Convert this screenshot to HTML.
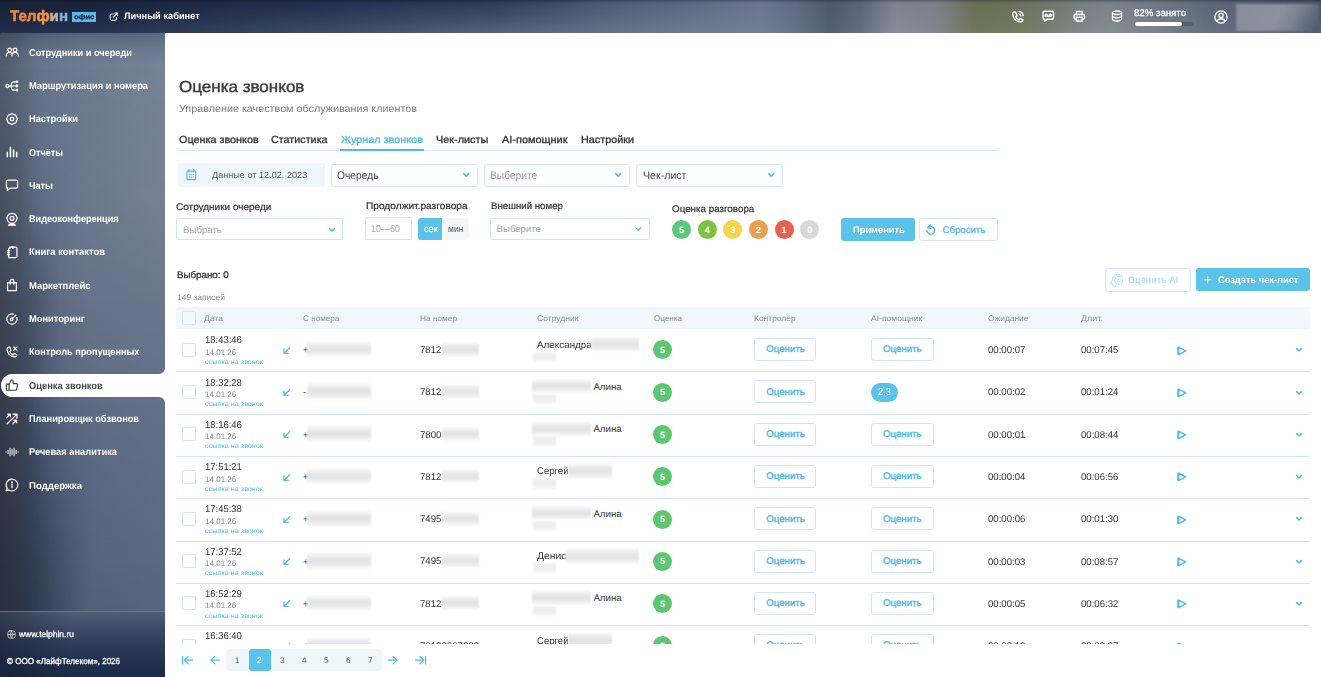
<!DOCTYPE html>
<html lang="ru">
<head>
<meta charset="utf-8">
<title>Оценка звонков</title>
<style>

*{box-sizing:border-box;margin:0;padding:0}
html,body{width:1321px;height:677px;overflow:hidden}
body{font-family:"Liberation Sans",sans-serif;text-rendering:geometricPrecision;color:#333;position:relative;background:#2c3956}
.t{position:absolute;white-space:nowrap;transform-origin:0 50%}
.a{position:absolute}
svg{display:block;overflow:visible}
/* header */
#hdr{position:absolute;left:0;top:0;width:1321px;height:33px;
background:linear-gradient(90deg,#172036 0,#19233c 120px,#1c2742 200px,#222f4c 350px,#2b3955 500px,#3b4965 560px,#485771 600px,#5c6a82 700px,#69778c 760px,#5f6b80 795px,#4c586b 830px,#5a6477 860px,#7b8391 895px,#787f84 940px,#686e54 975px,#6a7058 1010px,#70756a 1045px,#777d80 1080px,#7a8188 1110px,#6f7783 1160px,#5e687a 1205px,#4a5568 1321px)}
#hdr i{position:absolute;left:0;top:0;width:1321px;height:33px;
background:linear-gradient(90deg,#222e49 0,#25324e 100px,#2e3d5a 200px,#3f4e6a 350px,#55627b 500px,#65728a 620px,#6e7b91 700px,#717f93 760px,#667387 795px,#525e72 830px,#636d7f 860px,#858d9b 895px,#7f8689 940px,#70765a 975px,#73795c 1010px,#797e6c 1045px,#81878a 1080px,#848b91 1110px,#79818b 1160px,#667081 1205px,#566174 1321px);
-webkit-mask-image:linear-gradient(180deg,rgba(0,0,0,0) 0,rgba(0,0,0,.25) 8px,rgba(0,0,0,.6) 20px,#000 31px);mask-image:linear-gradient(180deg,rgba(0,0,0,0) 0,rgba(0,0,0,.25) 8px,rgba(0,0,0,.6) 20px,#000 31px)}
#hdr b{position:absolute;left:0;top:0;width:1321px;height:3px;background:linear-gradient(180deg,rgba(10,15,30,.32),rgba(10,15,30,0))}
#side{position:absolute;left:0;top:33px;width:165px;height:579px;border-radius:4px 0 0 0;overflow:hidden;background:#66748a}
#side i{position:absolute;left:0;top:0;width:165px;height:579px}
#sfoot{position:absolute;left:0;top:611px;width:165px;height:66px;border-top:1px solid #66738a;
background:
linear-gradient(90deg,rgba(24,30,46,.5) 0,rgba(24,30,46,.3) 30px,rgba(24,30,46,0) 70px),
linear-gradient(180deg,#4f5d76 0,#3d4b67 16px,#2b3a58 36px,#1f2e4d 55px,#1c2b4a 66px)}
#main{position:absolute;left:165px;top:33px;width:1156px;height:644px;background:#fff}
#active{position:absolute;left:1px;top:374.2px;width:165px;height:22.8px;background:#fff;border-radius:11.4px 0 0 11.4px}
.ic{position:absolute;fill:none;stroke:#fff;stroke-width:2.1;stroke-linecap:round;stroke-linejoin:round}
.box{position:absolute;border:1px solid #d2e7f3;border-radius:3px;background:#fff}
.cb{position:absolute;width:14px;height:14px;border:1px solid #cfe6f3;border-radius:2px;background:#fff}
.sc{position:absolute;width:19px;height:19px;border-radius:50%}
.bl{position:absolute;background:linear-gradient(180deg,#fcfcfc 0,#efefef 22%,#e3e3e3 45%,#e3e3e3 58%,#efefef 80%,#fcfcfc 100%);filter:blur(.8px)}
.b2{background:linear-gradient(180deg,#f3f3f3 0,#ececec 50%,#f8f8f8 100%)}
.hl{position:absolute;height:1px;background:#d2e6f1}
</style>
</head>
<body>
<div id="hdr"><i></i><b></b></div><div id="side"><i style="background:linear-gradient(90deg,#414a5c 0px,#485468 20px,#505f77 40px,#55657e 80px,#586880 165px);"></i><i style="background:linear-gradient(90deg,#4c5668 0px,#556175 20px,#5f6d84 40px,#65738a 80px,#6a788e 165px);-webkit-mask-image:linear-gradient(180deg,rgba(0,0,0,0) 0px,#000 15px);mask-image:linear-gradient(180deg,rgba(0,0,0,0) 0px,#000 15px);"></i><i style="background:linear-gradient(90deg,#525c6e 0px,#5c687c 20px,#67758b 40px,#6e7b8f 80px,#778498 165px);-webkit-mask-image:linear-gradient(180deg,rgba(0,0,0,0) 15px,#000 33px);mask-image:linear-gradient(180deg,rgba(0,0,0,0) 15px,#000 33px);"></i><i style="background:linear-gradient(90deg,#525c6e 0px,#5b677b 20px,#66748a 40px,#6d7a8e 80px,#768396 165px);-webkit-mask-image:linear-gradient(180deg,rgba(0,0,0,0) 33px,#000 37px);mask-image:linear-gradient(180deg,rgba(0,0,0,0) 33px,#000 37px);"></i><i style="background:linear-gradient(90deg,#47505f 0px,#4f5a6c 20px,#5f6d84 40px,#6b788c 80px,#758192 165px);-webkit-mask-image:linear-gradient(180deg,rgba(0,0,0,0) 37px,#000 167px);mask-image:linear-gradient(180deg,rgba(0,0,0,0) 37px,#000 167px);"></i><i style="background:linear-gradient(90deg,#3d4554 0px,#434d60 20px,#4a566c 35px,#5e6c84 60px,#667388 90px,#6b778b 165px);-webkit-mask-image:linear-gradient(180deg,rgba(0,0,0,0) 167px,#000 267px);mask-image:linear-gradient(180deg,rgba(0,0,0,0) 167px,#000 267px);"></i><i style="background:linear-gradient(90deg,#343c4b 0px,#3b4556 20px,#3f4a60 30px,#44526b 36px,#4f5d76 50px,#5a6880 70px,#5f6d84 100px,#63718a 165px);-webkit-mask-image:linear-gradient(180deg,rgba(0,0,0,0) 267px,#000 371px);mask-image:linear-gradient(180deg,rgba(0,0,0,0) 267px,#000 371px);"></i><i style="background:linear-gradient(90deg,#2a3140 0px,#2d374a 20px,#313d52 35px,#3f4d66 55px,#55647d 90px,#5a6981 165px);-webkit-mask-image:linear-gradient(180deg,rgba(0,0,0,0) 371px,#000 533px);mask-image:linear-gradient(180deg,rgba(0,0,0,0) 371px,#000 533px);"></i><i style="background:linear-gradient(90deg,#282f3e 0px,#2b3548 20px,#2f3b50 35px,#3c4a63 55px,#52617a 90px,#566580 165px);-webkit-mask-image:linear-gradient(180deg,rgba(0,0,0,0) 533px,#000 579px);mask-image:linear-gradient(180deg,rgba(0,0,0,0) 533px,#000 579px);"></i></div><div id="sfoot"></div><div id="main"></div><div id="active"></div>
<svg class="a" style="left:159px;top:368px" width="6" height="6" viewBox="0 0 6 6"><path d="M6 0V6H0A6 6 0 0 0 6 0Z" fill="#fff"/></svg>
<svg class="a" style="left:159px;top:397px" width="6" height="6" viewBox="0 0 6 6"><path d="M6 6V0H0A6 6 0 0 1 6 6Z" fill="#fff"/></svg>
<svg class="ic" style="left:5.4px;top:45.2px" width="14" height="14" viewBox="0 0 24 24"><circle cx="7.900" cy="8.600" r="3.200"/><path d="M2.200 18.500c.3-3.600 2.500-5.800 5.700-5.800 1.900 0 3.400.9 4.400 2.300"/><circle cx="17.300" cy="8.600" r="3.200"/><path d="M11.800 18.500c.3-3.600 2.400-5.800 5.500-5.800s5.200 2.200 5.500 5.800"/></svg>
<span class="t" style="left:29.40px;top:47.60px;font-size:10px;line-height:12px;color:#fff;font-weight:bold;transform:scaleX(0.9182);">Сотрудники и очереди</span>
<svg class="ic" style="left:5.4px;top:78.5px" width="14" height="14" viewBox="0 0 24 24"><circle cx="4.200" cy="12" r="2.600"/><path d="M7 12h12M10.500 12c0-4.500 2-7 5-7h3.500M10.500 12c0 4.500 2 7 5 7h3.500"/><circle cx="20.500" cy="5" r="1.400" fill="#fff"/><circle cx="20.500" cy="12" r="1.400" fill="#fff"/><circle cx="20.500" cy="19" r="1.400" fill="#fff"/></svg>
<span class="t" style="left:29.40px;top:80.90px;font-size:10px;line-height:12px;color:#fff;font-weight:bold;transform:scaleX(0.9293);">Маршрутизация и номера</span>
<svg class="ic" style="left:5.4px;top:111.8px" width="14" height="14" viewBox="0 0 24 24"><path d="M10.47 3.35Q12.00 2.10 13.53 3.35Q15.06 4.61 17.03 4.80Q19.00 5.00 19.20 6.97Q19.39 8.94 20.65 10.47Q21.90 12.00 20.65 13.53Q19.39 15.06 19.20 17.03Q19.00 19.00 17.03 19.20Q15.06 19.39 13.53 20.65Q12.00 21.90 10.47 20.65Q8.94 19.39 6.97 19.20Q5.00 19.00 4.80 17.03Q4.61 15.06 3.35 13.53Q2.10 12.00 3.35 10.47Q4.61 8.94 4.80 6.97Q5.00 5.00 6.97 4.80Q8.94 4.61 10.47 3.35Z"/><circle cx="12" cy="12" r="3"/></svg>
<span class="t" style="left:29.40px;top:114.20px;font-size:10px;line-height:12px;color:#fff;font-weight:bold;transform:scaleX(0.9286);">Настройки</span>
<svg class="ic" style="left:5.4px;top:145.1px" width="14" height="14" viewBox="0 0 24 24"><path d="M4 13v7M9.300 4v16M14.700 8.500V20M20 13v7" stroke-width="2.600"/></svg>
<span class="t" style="left:29.40px;top:147.50px;font-size:10px;line-height:12px;color:#fff;font-weight:bold;transform:scaleX(0.9070);">Отчёты</span>
<svg class="ic" style="left:5.4px;top:178.4px" width="14" height="14" viewBox="0 0 24 24"><path d="M5 3.500h14a2.500 2.500 0 0 1 2.500 2.500v9a2.500 2.500 0 0 1-2.500 2.500H9.500L4 21.500v-4H5A2.500 2.500 0 0 1 2.500 15V6A2.500 2.500 0 0 1 5 3.500z"/></svg>
<span class="t" style="left:29.40px;top:180.80px;font-size:10px;line-height:12px;color:#fff;font-weight:bold;transform:scaleX(0.9220);">Чаты</span>
<svg class="ic" style="left:5.4px;top:211.7px" width="14" height="14" viewBox="0 0 24 24"><circle cx="12" cy="10.800" r="8.600"/><circle cx="12" cy="10.800" r="3.400"/><path d="M6 22.500c1.500-1.700 3.500-2.500 6-2.500s4.500.8 6 2.500z" fill="#fff"/></svg>
<span class="t" style="left:29.40px;top:214.10px;font-size:10px;line-height:12px;color:#fff;font-weight:bold;transform:scaleX(0.9102);">Видеоконференция</span>
<svg class="ic" style="left:5.4px;top:245.0px" width="14" height="14" viewBox="0 0 24 24"><path d="M8 3.500h10.500a2 2 0 0 1 2 2v14a2 2 0 0 1-2 2H6.500v-15z"/><path d="M6.500 6.500l7-4v3.500"/><path d="M4 9.500h4M4 13h4M4 16.500h4"/></svg>
<span class="t" style="left:29.40px;top:247.40px;font-size:10px;line-height:12px;color:#fff;font-weight:bold;transform:scaleX(0.9463);">Книга контактов</span>
<svg class="ic" style="left:5.4px;top:278.3px" width="14" height="14" viewBox="0 0 24 24"><path d="M4.500 8h15v13.500h-15z"/><path d="M9 10.500V5.500a3 3 0 0 1 6 0v5"/></svg>
<span class="t" style="left:29.40px;top:280.70px;font-size:10px;line-height:12px;color:#fff;font-weight:bold;transform:scaleX(0.9462);">Маркетплейс</span>
<svg class="ic" style="left:5.4px;top:311.6px" width="14" height="14" viewBox="0 0 24 24"><path d="M20.300 9.500A8.800 8.800 0 1 1 14.500 3.700"/><circle cx="11.500" cy="12.500" r="2.300"/><path d="M13.200 10.800l5.300-5.300"/></svg>
<span class="t" style="left:29.40px;top:314.00px;font-size:10px;line-height:12px;color:#fff;font-weight:bold;transform:scaleX(0.9288);">Мониторинг</span>
<svg class="ic" style="left:5.4px;top:344.9px" width="14" height="14" viewBox="0 0 24 24"><path d="M6.500 3.500c-1.500.3-3 1.500-3 3.500 0 7.500 6 13.500 13.500 13.500 2 0 3.200-1.500 3.500-3 .1-.6-.2-1-.7-1.200l-3.600-1.500c-.5-.2-1 0-1.300.4l-1.200 1.600c-2.500-1.200-4.500-3.200-5.700-5.700l1.600-1.200c.4-.3.600-.8.400-1.300L8.500 4.200c-.2-.5-.6-.800-1.200-.700z"/><path d="M15 3.500l5.500 5.500M20.500 3.500L15 9"/></svg>
<span class="t" style="left:29.40px;top:347.30px;font-size:10px;line-height:12px;color:#fff;font-weight:bold;transform:scaleX(0.9167);">Контроль пропущенных</span>
<svg class="ic" style="left:5.4px;top:378.2px;stroke:#444" width="14" height="14" viewBox="0 0 24 24"><path d="M2.500 10.500h4.500v10.500H2.500z"/><path d="M7 11l4-8c1.700 0 3 1.300 3 3v3.500h5.500c1.300 0 2.300 1.200 2 2.500l-1.400 7c-.2 1.200-1.200 2-2.400 2H7"/></svg>
<span class="t" style="left:29.40px;top:380.60px;font-size:10px;line-height:12px;color:#4a4a4a;font-weight:bold;transform:scaleX(0.9325);">Оценка звонков</span>
<svg class="ic" style="left:5.4px;top:411.5px" width="14" height="14" viewBox="0 0 24 24"><path d="M3.500 20.500L20 4M13.500 3.500h7v7"/><path d="M3 9.500l5.500-5.500M4.500 3.500h4.500v4.500" stroke-width="2"/><path d="M13.500 20.500l6-6M15.500 14h4.500v4.500" stroke-width="2"/></svg>
<span class="t" style="left:29.40px;top:413.90px;font-size:10px;line-height:12px;color:#fff;font-weight:bold;transform:scaleX(0.9199);">Планировщик обзвонов</span>
<svg class="ic" style="left:5.4px;top:444.8px" width="14" height="14" viewBox="0 0 24 24"><path d="M1.89 11.00v2.00M5.31 8.55v6.90M8.74 4.70v14.60M12.17 6.85v10.30M15.60 4.70v14.60M19.03 8.55v6.90M22.46 11.00v2.00" stroke-width="1.700" stroke-linecap="butt"/></svg>
<span class="t" style="left:29.40px;top:447.20px;font-size:10px;line-height:12px;color:#fff;font-weight:bold;transform:scaleX(0.9304);">Речевая аналитика</span>
<svg class="ic" style="left:5.4px;top:478.1px" width="14" height="14" viewBox="0 0 24 24"><path d="M12 2a10 10 0 1 1-5.400 18.400L2 22l1.700-4.400A10 10 0 0 1 12 2z"/><path d="M12 11v5.500"/><circle cx="12" cy="7.500" r=".7" fill="#fff"/></svg>
<span class="t" style="left:29.40px;top:480.50px;font-size:10px;line-height:12px;color:#fff;font-weight:bold;transform:scaleX(0.9625);">Поддержка</span>
<svg class="ic" style="left:6.5px;top:629.5px;stroke-width:2.2;opacity:.8" width="9" height="9" viewBox="0 0 24 24"><rect x="2.500" y="2.500" width="19" height="19" rx="5"/><path d="M2.500 12h19M12 2.500c-4 3-4 16 0 19M12 2.500c4 3 4 16 0 19"/></svg>
<span class="t" style="left:19.40px;top:628.60px;font-size:8.6px;line-height:10px;color:#fff;-webkit-text-stroke:0.3px #fff;transform:scaleX(0.9823);">www.telphin.ru</span>
<span class="t" style="left:6.90px;top:655.80px;font-size:8.6px;line-height:10px;color:#fff;-webkit-text-stroke:0.3px #fff;transform:scaleX(0.9385);">© ООО «ЛайфТелеком», 2026</span>
<span class="t" style="left:10.00px;top:7.80px;font-size:15.2px;line-height:18px;color:#f5873b;font-weight:bold;transform:scaleX(0.9922);"><span style="color:#f5873b;-webkit-text-stroke:.5px #f5873b">Тел</span><span style="color:#f49a45;-webkit-text-stroke:.5px #f49a45">ф</span><span style="color:#c9b5a5;-webkit-text-stroke:.5px #c9b5a5">и</span><span style="color:#7fb5dc;-webkit-text-stroke:.5px #7fb5dc">н</span></span>
<div class="a" style="left:72px;top:12px;width:24px;height:10px;background:#5bb8e4"></div>
<span class="t" style="left:73.70px;top:14.10px;font-size:6.7px;line-height:8px;color:#16264c;font-weight:bold;-webkit-text-stroke:0.25px #16264c;transform:scaleX(1.1473);">офис</span>
<svg class="ic" style="left:108.8px;top:12px;stroke-width:2.6" width="9.4" height="9.4" viewBox="0 0 24 24"><path d="M10 5H6.500A3.500 3.500 0 0 0 3 8.500v9A3.500 3.500 0 0 0 6.500 21h9a3.500 3.500 0 0 0 3.500-3.500V14"/><path d="M14.500 2.500h7v7M21 3L11 13"/></svg>
<span class="t" style="left:124.20px;top:11.30px;font-size:9.6px;line-height:12px;color:#fff;font-weight:bold;transform:scaleX(0.9666);">Личный кабинет</span>
<svg class="ic" style="left:1010.8px;top:9.5px;stroke-width:2.600" width="13.6" height="13.6" viewBox="0 0 24 24"><path d="M6 3c-1.500.3-3 1.500-3 3.500C3 14.500 9.500 21 17.500 21c2 0 3.200-1.500 3.500-3 .1-.6-.2-1-.7-1.200l-3.600-1.500c-.5-.2-1 0-1.300.4l-1.200 1.600c-2.500-1.200-4.500-3.200-5.700-5.700l1.600-1.200c.4-.3.600-.8.400-1.300L9 5.500 8 3.700c-.2-.5-.6-.800-2-.700z"/><path d="M14 2.500c4.500.3 7.200 3 7.500 7.500M13.500 6.500c2.300.2 3.800 1.700 4 4"/></svg>
<svg class="ic" style="left:1042px;top:9.9px;stroke-width:2.700" width="12.6" height="12.6" viewBox="0 0 24 24"><path d="M4.500 2.500h15a2.500 2.500 0 0 1 2.500 2.500v10a2.500 2.500 0 0 1-2.500 2.500H10l-5 4v-4h-.5A2.500 2.500 0 0 1 2 15V5a2.500 2.500 0 0 1 2.500-2.500z"/><circle cx="8" cy="10" r="2"/><circle cx="16" cy="10" r="2"/><path d="M8 12h8"/></svg>
<svg class="ic" style="left:1072.5px;top:10.2px;stroke-width:2.700" width="12.6" height="12.6" viewBox="0 0 24 24"><path d="M6.500 8.500V3h11v5.500"/><path d="M6 17.500H4.500A2.500 2.500 0 0 1 2 15v-4a2.500 2.500 0 0 1 2.500-2.500h15A2.500 2.500 0 0 1 22 11v4a2.500 2.500 0 0 1-2.500 2.500H18"/><path d="M6.500 13.500h11V21h-11z"/></svg>
<svg class="ic" style="left:1111.2px;top:10px;stroke-width:2.600" width="12" height="12" viewBox="0 0 24 24"><ellipse cx="12" cy="5.500" rx="9" ry="3.500"/><path d="M3 5.500v13c0 2 4 3.500 9 3.500s9-1.500 9-3.500v-13M3 12c0 2 4 3.500 9 3.500s9-1.500 9-3.500"/></svg>
<span class="t" style="left:1134.30px;top:7.90px;font-size:9.6px;line-height:12px;color:#fff;-webkit-text-stroke:0.3px #fff;transform:scaleX(1.0054);">82% занято</span>
<div class="a" style="left:1134.5px;top:22px;width:58px;height:4px;border-radius:2px;background:#555e6d"></div>
<div class="a" style="left:1134.5px;top:22px;width:47.5px;height:4px;border-radius:2px;background:#fff"></div>
<svg class="ic" style="left:1213.6px;top:9.6px;stroke-width:2.300" width="14" height="14" viewBox="0 0 24 24"><circle cx="12" cy="12" r="10.500"/><circle cx="12" cy="9.500" r="3.600"/><path d="M5 19.500c1.200-3 3.800-4.500 7-4.500s5.800 1.500 7 4.500"/></svg>
<div class="a" style="left:1235.5px;top:4.2px;width:83.5px;height:26.5px;background:linear-gradient(118deg,#878d99 0,#8c929d 50%,#7b8391 68%,#626b7b 85%,#4f596a 100%);filter:blur(1.200px)"></div>
<span class="t" style="left:178.90px;top:78.40px;font-size:16px;line-height:19px;color:#3a3a3a;-webkit-text-stroke:0.4px #3a3a3a;transform:scaleX(1.0643);">Оценка звонков</span>
<span class="t" style="left:178.90px;top:104.30px;font-size:10.3px;line-height:12px;color:#777;transform:scaleX(1.0464);">Управление качеством обслуживания клиентов</span>
<span class="t" style="left:178.90px;top:135.10px;font-size:10.3px;line-height:12px;color:#333;-webkit-text-stroke:0.3px #333;transform:scaleX(1.0508);">Оценка звонков</span>
<span class="t" style="left:271.30px;top:135.10px;font-size:10.3px;line-height:12px;color:#333;-webkit-text-stroke:0.3px #333;transform:scaleX(1.0463);">Статистика</span>
<span class="t" style="left:340.60px;top:135.10px;font-size:10.3px;line-height:12px;color:#50bae9;-webkit-text-stroke:0.3px #50bae9;transform:scaleX(1.0547);">Журнал звонков</span>
<span class="t" style="left:435.90px;top:135.10px;font-size:10.3px;line-height:12px;color:#333;-webkit-text-stroke:0.3px #333;transform:scaleX(1.0552);">Чек-листы</span>
<span class="t" style="left:502.20px;top:135.10px;font-size:10.3px;line-height:12px;color:#333;-webkit-text-stroke:0.3px #333;transform:scaleX(1.0618);">AI-помощник</span>
<span class="t" style="left:581.10px;top:135.10px;font-size:10.3px;line-height:12px;color:#333;-webkit-text-stroke:0.3px #333;transform:scaleX(1.0495);">Настройки</span>
<div class="hl" style="left:178px;top:150px;width:820px;background:#d6ebf6"></div>
<div class="a" style="left:340px;top:149px;width:83.5px;height:2px;background:#50bae9"></div>
<div class="a" style="left:178px;top:163px;width:147px;height:24px;border-radius:3px;background:#f0f7fc"></div>
<svg class="a" style="left:185.7px;top:168.8px" width="10.6" height="11.4" viewBox="0 0 20 22" fill="none" stroke="#50bae9" stroke-width="2.200"><rect x="1.500" y="4" width="17" height="16.500" rx="1.500"/><path d="M5.500 1v5M14.500 1v5" stroke-linecap="round"/><path d="M5 10.500h2.500M8.800 10.500h2.500M12.600 10.500h2.500M5 14h2.500M8.800 14h2.500M12.600 14h2.500M5 17.200h2.500M8.800 17.200h2.500" stroke-width="1.800"/></svg>
<span class="t" style="left:211.70px;top:170.30px;font-size:8.9px;line-height:11px;color:#555;transform:scaleX(1.0271);">Данные от 12.02. 2023</span>
<div class="box" style="left:331.0px;top:163.5px;width:147.0px;height:23.5px"></div>
<span class="t" style="left:337.30px;top:170.20px;font-size:11.1px;line-height:13px;color:#444;transform:scaleX(0.9257);">Очередь</span>
<svg class="a" style="left:463.0px;top:173.0px" width="6.4" height="3.8" viewBox="0 0 10 6"><path d="M1 1l4 4 4-4" fill="none" stroke="#50bae9" stroke-width="2.66" stroke-linecap="round" stroke-linejoin="round"/></svg>
<div class="box" style="left:484.0px;top:163.5px;width:146.0px;height:23.5px"></div>
<span class="t" style="left:490.30px;top:170.20px;font-size:11.1px;line-height:13px;color:#9a9a9a;transform:scaleX(0.9207);">Выберите</span>
<svg class="a" style="left:615.0px;top:173.0px" width="6.4" height="3.8" viewBox="0 0 10 6"><path d="M1 1l4 4 4-4" fill="none" stroke="#50bae9" stroke-width="2.66" stroke-linecap="round" stroke-linejoin="round"/></svg>
<div class="box" style="left:636.4px;top:163.5px;width:146.2px;height:23.5px"></div>
<span class="t" style="left:642.70px;top:170.20px;font-size:11.1px;line-height:13px;color:#444;transform:scaleX(0.9577);">Чек-лист</span>
<svg class="a" style="left:767.6px;top:173.0px" width="6.4" height="3.8" viewBox="0 0 10 6"><path d="M1 1l4 4 4-4" fill="none" stroke="#50bae9" stroke-width="2.66" stroke-linecap="round" stroke-linejoin="round"/></svg>
<span class="t" style="left:176.00px;top:201.50px;font-size:9.6px;line-height:12px;color:#333;-webkit-text-stroke:0.22px #333;transform:scaleX(1.0414);">Сотрудники очереди</span>
<span class="t" style="left:365.60px;top:200.80px;font-size:9.6px;line-height:12px;color:#333;-webkit-text-stroke:0.22px #333;transform:scaleX(1.0580);">Продолжит.разговора</span>
<span class="t" style="left:490.60px;top:201.30px;font-size:9.6px;line-height:12px;color:#333;-webkit-text-stroke:0.22px #333;transform:scaleX(1.0082);">Внешний номер</span>
<span class="t" style="left:672.30px;top:204.00px;font-size:9.6px;line-height:12px;color:#333;-webkit-text-stroke:0.2px #333;transform:scaleX(1.0226);">Оценка разговора</span>
<div class="box" style="left:176px;top:218.2px;width:167px;height:21.5px;border-radius:2px"></div>
<span class="t" style="left:182.90px;top:224.50px;font-size:9.6px;line-height:12px;color:#a5a5a5;transform:scaleX(1.0063);">Выбрать</span>
<svg class="a" style="left:328.5px;top:227.5px" width="6.0" height="3.6" viewBox="0 0 10 6"><path d="M1 1l4 4 4-4" fill="none" stroke="#50bae9" stroke-width="2.67" stroke-linecap="round" stroke-linejoin="round"/></svg>
<div class="box" style="left:365.3px;top:217.2px;width:47px;height:23.3px;border-radius:2px"></div>
<span class="t" style="left:371.40px;top:224.40px;font-size:10px;line-height:12px;color:#aaa;transform:scaleX(0.8992);">10—60</span>
<div class="a" style="left:418px;top:218px;width:24px;height:22px;background:#5bc2ea;border-radius:3px 0 0 3px"></div>
<div class="a" style="left:442px;top:218px;width:26.6px;height:22px;background:#f1f8fc;border-radius:0 4px 4px 0"></div>
<span class="t" style="left:423.60px;top:223.90px;font-size:9.6px;line-height:12px;color:#fff;-webkit-text-stroke:0.1px #fff;transform:scaleX(0.9551);">сек</span>
<span class="t" style="left:447.70px;top:223.90px;font-size:9.6px;line-height:12px;color:#555;transform:scaleX(0.8977);">мин</span>
<div class="box" style="left:490px;top:218.2px;width:160px;height:21.5px;border-radius:2px"></div>
<span class="t" style="left:496.60px;top:224.40px;font-size:9.6px;line-height:12px;color:#a5a5a5;">Выберите</span>
<svg class="a" style="left:634.7px;top:227.0px" width="6.6" height="4.0" viewBox="0 0 10 6"><path d="M1 1l4 4 4-4" fill="none" stroke="#50bae9" stroke-width="1.67" stroke-linecap="round" stroke-linejoin="round"/></svg>
<div class="sc" style="left:672.1px;top:219.9px;background:#5cc878"></div>
<span class="t" style="left:679.00px;top:224.50px;font-size:9px;line-height:11px;color:#fff;font-weight:bold;">5</span>
<div class="sc" style="left:697.8px;top:219.9px;background:#7fc241"></div>
<span class="t" style="left:704.65px;top:224.50px;font-size:9px;line-height:11px;color:#fff;font-weight:bold;">4</span>
<div class="sc" style="left:723.4px;top:219.9px;background:#f7d24c"></div>
<span class="t" style="left:730.30px;top:224.50px;font-size:9px;line-height:11px;color:#fff;font-weight:bold;">3</span>
<div class="sc" style="left:749.1px;top:219.9px;background:#e8a04e"></div>
<span class="t" style="left:755.95px;top:224.50px;font-size:9px;line-height:11px;color:#fff;font-weight:bold;">2</span>
<div class="sc" style="left:774.7px;top:219.9px;background:#e7604f"></div>
<span class="t" style="left:781.60px;top:224.50px;font-size:9px;line-height:11px;color:#fff;font-weight:bold;">1</span>
<div class="sc" style="left:800.4px;top:219.9px;background:#d8d8d8"></div>
<span class="t" style="left:807.25px;top:224.50px;font-size:9px;line-height:11px;color:#fff;font-weight:bold;">0</span>
<div class="a" style="left:841.3px;top:218.2px;width:73.6px;height:22.5px;border-radius:3px;background:#5bc2ea"></div>
<span class="t" style="left:852.50px;top:224.50px;font-size:9.6px;line-height:12px;color:#fff;font-weight:bold;transform:scaleX(0.9705);">Применить</span>
<div class="box" style="left:919px;top:218.2px;width:78.7px;height:22.5px"></div>
<svg class="a" style="left:926px;top:224px" width="9.6" height="10.6" viewBox="0 0 20 22" fill="none" stroke="#50bae9" stroke-width="2.900" stroke-linecap="round" stroke-linejoin="round"><path d="M4.500 7.500A8 8 0 1 1 2 13"/><path d="M9 1.500L4.200 7.200 10 9.500"/></svg>
<span class="t" style="left:942.60px;top:224.80px;font-size:9.6px;line-height:12px;color:#50bae9;-webkit-text-stroke:0.3px #50bae9;">Сбросить</span>
<span class="t" style="left:176.50px;top:269.70px;font-size:9.6px;line-height:12px;color:#333;-webkit-text-stroke:0.3px #333;transform:scaleX(1.0164);">Выбрано: 0</span>
<span class="t" style="left:176.50px;top:293.00px;font-size:8.1px;line-height:10px;color:#8a8a8a;transform:scaleX(1.0445);">149 записей</span>
<div class="box" style="left:1105px;top:268.4px;width:85.5px;height:23.3px"></div>
<svg class="a" style="left:1110px;top:273.5px" width="13" height="13" viewBox="0 0 13 13" fill="none" stroke="#b3e1f5" stroke-width="1.100" stroke-linecap="round" stroke-linejoin="round"><path d="M6.300 12.300c-2 .5-3.500-.2-3.600-2.100L1.200 9.600c-.4-.2-.5-.5-.3-.9L2.300 6.400C2.400 3.100 4.900.7 8.300.6c1.100 0 2.100.2 3 .7"/><circle cx="8.700" cy="6.200" r="3.900"/></svg>
<span class="t" style="left:1116.70px;top:277.50px;font-size:4.6px;line-height:6px;color:#b3e1f5;font-weight:bold;transform:scaleX(0.9143);">AI</span>
<span class="t" style="left:1127.60px;top:274.80px;font-size:9.6px;line-height:12px;color:#b3e1f5;font-weight:bold;transform:scaleX(0.9465);">Оценить AI</span>
<div class="a" style="left:1196.1px;top:268.4px;width:113.7px;height:22.3px;border-radius:3px;background:#5bc2ea"></div>
<svg class="a" style="left:1203.6px;top:276px" width="7.4" height="7.4" viewBox="0 0 10 10" stroke="#fff" stroke-width="1.500" stroke-linecap="round"><path d="M5 .8v8.400M.8 5h8.400"/></svg>
<span class="t" style="left:1218.00px;top:274.60px;font-size:9.6px;line-height:12px;color:#fff;font-weight:bold;transform:scaleX(0.9681);">Создать чек-лист</span>
<div class="a" style="left:176px;top:307px;width:1134px;height:22.3px;border-radius:3px 3px 0 0;background:#f0f8fd"></div>
<div class="cb" style="left:182px;top:311px;background:#f3f9fd;border-color:#d6e9f3"></div>
<span class="t" style="left:203.90px;top:314.20px;font-size:8.1px;line-height:10px;color:#8a8a8a;transform:scaleX(1.0537);">Дата</span>
<span class="t" style="left:302.70px;top:314.20px;font-size:8.1px;line-height:10px;color:#8a8a8a;transform:scaleX(1.0072);">С номера</span>
<span class="t" style="left:420.00px;top:314.20px;font-size:8.1px;line-height:10px;color:#8a8a8a;transform:scaleX(1.0238);">На номер</span>
<span class="t" style="left:536.50px;top:314.20px;font-size:8.1px;line-height:10px;color:#8a8a8a;transform:scaleX(1.0552);">Сотрудник</span>
<span class="t" style="left:654.00px;top:314.20px;font-size:8.1px;line-height:10px;color:#8a8a8a;">Оценка</span>
<span class="t" style="left:754.00px;top:314.20px;font-size:8.1px;line-height:10px;color:#8a8a8a;transform:scaleX(1.0437);">Контролёр</span>
<span class="t" style="left:871.00px;top:314.20px;font-size:8.1px;line-height:10px;color:#8a8a8a;transform:scaleX(1.0560);">AI-помощник</span>
<span class="t" style="left:987.80px;top:314.20px;font-size:8.1px;line-height:10px;color:#8a8a8a;transform:scaleX(1.0397);">Ожидание</span>
<span class="t" style="left:1081.40px;top:314.20px;font-size:8.1px;line-height:10px;color:#8a8a8a;transform:scaleX(1.1062);">Длит.</span>
<div class="a" style="left:165px;top:329px;width:1156px;height:315px;overflow:hidden">
<div class="cb" style="left:17px;top:13.6px"></div>
<span class="t" style="left:39.60px;top:6.20px;font-size:9.9px;line-height:12px;color:#333;transform:scaleX(0.9596);">18:43:46</span>
<span class="t" style="left:39.60px;top:18.60px;font-size:8.1px;line-height:10px;color:#8a8a8a;transform:scaleX(0.9932);">14.01.26</span>
<span class="t" style="left:39.60px;top:29.80px;font-size:6.6px;line-height:8px;color:#50bae9;transform:scaleX(1.0908);">ссылка на звонок</span>
<svg class="a" style="left:117.6px;top:17.6px" width="7.4" height="7.4" viewBox="0 0 10 10" fill="none" stroke="#50bae9" stroke-width="1.700" stroke-linecap="round" stroke-linejoin="round"><path d="M9 1L1.500 8.500M1.300 3v5.700H7"/></svg>
<span class="t" style="left:138.00px;top:16.00px;font-size:9.6px;line-height:12px;color:#444;">+</span>
<div class="bl" style="left:142.0px;top:11.8px;width:64px;height:16.5px"></div>
<span class="t" style="left:255.00px;top:15.90px;font-size:9.8px;line-height:12px;color:#333;transform:scaleX(0.9772);">7812</span>
<div class="bl" style="left:277.1px;top:12.9px;width:36.6px;height:14.7px"></div>
<span class="t" style="left:371.60px;top:10.50px;font-size:9.7px;line-height:12px;color:#333;transform:scaleX(1.0175);">Александра</span>
<div class="bl" style="left:426.4px;top:7.0px;width:48.0px;height:16px"></div>
<div class="bl b2" style="left:368.1px;top:22.7px;width:23px;height:10px"></div>
<div class="sc" style="left:488.1px;top:11.3px;background:#5cc76f"></div>
<span class="t" style="left:495.00px;top:15.90px;font-size:9px;line-height:11px;color:#fff;font-weight:bold;">5</span>
<div class="box" style="left:589.0px;top:9.0px;width:62.3px;height:23px"></div>
<span class="t" style="left:601.20px;top:15.30px;font-size:9.7px;line-height:12px;color:#50bae9;-webkit-text-stroke:0.4px #50bae9;">Оценить</span>
<div class="box" style="left:706.0px;top:9.0px;width:62.6px;height:23px"></div>
<span class="t" style="left:718.00px;top:15.30px;font-size:9.7px;line-height:12px;color:#50bae9;-webkit-text-stroke:0.4px #50bae9;">Оценить</span>
<span class="t" style="left:822.80px;top:16.00px;font-size:9.8px;line-height:12px;color:#333;transform:scaleX(0.9780);">00:00:07</span>
<span class="t" style="left:916.40px;top:16.00px;font-size:9.8px;line-height:12px;color:#333;transform:scaleX(0.9806);">00:07:45</span>
<svg class="a" style="left:1011.6px;top:16.5px" width="9.6" height="9.8" viewBox="0 0 10 10" fill="none" stroke="#50bae9" stroke-width="1.500" stroke-linejoin="round"><path d="M1.600 1l7.500 4-7.500 4z"/><path d="M1.300 1v8" stroke-width="2"/></svg>
<svg class="a" style="left:1130.7px;top:19.2px" width="6.0" height="3.6" viewBox="0 0 10 6"><path d="M1 1l4 4 4-4" fill="none" stroke="#50bae9" stroke-width="2.50" stroke-linecap="round" stroke-linejoin="round"/></svg>
<div class="hl" style="left:11px;top:42.0px;width:1134px"></div>
<div class="cb" style="left:17px;top:55.9px"></div>
<span class="t" style="left:39.60px;top:48.50px;font-size:9.9px;line-height:12px;color:#333;transform:scaleX(0.9596);">18:32:28</span>
<span class="t" style="left:39.60px;top:60.90px;font-size:8.1px;line-height:10px;color:#8a8a8a;transform:scaleX(0.9932);">14.01.26</span>
<span class="t" style="left:39.60px;top:72.10px;font-size:6.6px;line-height:8px;color:#50bae9;transform:scaleX(1.0908);">ссылка на звонок</span>
<svg class="a" style="left:117.6px;top:59.9px" width="7.4" height="7.4" viewBox="0 0 10 10" fill="none" stroke="#50bae9" stroke-width="1.700" stroke-linecap="round" stroke-linejoin="round"><path d="M9 1L1.500 8.500M1.300 3v5.700H7"/></svg>
<span class="t" style="left:138.00px;top:58.30px;font-size:9.6px;line-height:12px;color:#444;">-</span>
<div class="bl" style="left:142.0px;top:54.1px;width:64px;height:16.5px"></div>
<span class="t" style="left:255.00px;top:58.20px;font-size:9.8px;line-height:12px;color:#333;transform:scaleX(0.9772);">7812</span>
<div class="bl" style="left:277.1px;top:55.2px;width:36.6px;height:14.7px"></div>
<div class="bl" style="left:367.3px;top:49.8px;width:58.5px;height:14.5px"></div>
<span class="t" style="left:428.40px;top:52.80px;font-size:9.7px;line-height:12px;color:#333;">Алина</span>
<div class="bl b2" style="left:368.1px;top:65.0px;width:23px;height:10px"></div>
<div class="sc" style="left:488.1px;top:53.6px;background:#5cc76f"></div>
<span class="t" style="left:495.00px;top:58.20px;font-size:9px;line-height:11px;color:#fff;font-weight:bold;">5</span>
<div class="box" style="left:589.0px;top:51.3px;width:62.3px;height:23px"></div>
<span class="t" style="left:601.20px;top:57.60px;font-size:9.7px;line-height:12px;color:#50bae9;-webkit-text-stroke:0.4px #50bae9;">Оценить</span>
<div class="a" style="left:705.9px;top:53.9px;width:27.3px;height:18.8px;border-radius:9.4px;background:#5bc2ea"></div>
<span class="t" style="left:713.40px;top:58.40px;font-size:10px;line-height:12px;color:#fff;transform:scaleX(0.9276);">2.3</span>
<span class="t" style="left:822.80px;top:58.30px;font-size:9.8px;line-height:12px;color:#333;transform:scaleX(0.9780);">00:00:02</span>
<span class="t" style="left:916.40px;top:58.30px;font-size:9.8px;line-height:12px;color:#333;transform:scaleX(0.9806);">00:01:24</span>
<svg class="a" style="left:1011.6px;top:58.8px" width="9.6" height="9.8" viewBox="0 0 10 10" fill="none" stroke="#50bae9" stroke-width="1.500" stroke-linejoin="round"><path d="M1.600 1l7.500 4-7.500 4z"/><path d="M1.300 1v8" stroke-width="2"/></svg>
<svg class="a" style="left:1130.7px;top:61.5px" width="6.0" height="3.6" viewBox="0 0 10 6"><path d="M1 1l4 4 4-4" fill="none" stroke="#50bae9" stroke-width="2.50" stroke-linecap="round" stroke-linejoin="round"/></svg>
<div class="hl" style="left:11px;top:85.0px;width:1134px"></div>
<div class="cb" style="left:17px;top:98.2px"></div>
<span class="t" style="left:39.60px;top:90.80px;font-size:9.9px;line-height:12px;color:#333;transform:scaleX(0.9596);">18:16:46</span>
<span class="t" style="left:39.60px;top:103.20px;font-size:8.1px;line-height:10px;color:#8a8a8a;transform:scaleX(0.9932);">14.01.26</span>
<span class="t" style="left:39.60px;top:114.40px;font-size:6.6px;line-height:8px;color:#50bae9;transform:scaleX(1.0908);">ссылка на звонок</span>
<svg class="a" style="left:117.6px;top:102.2px" width="7.4" height="7.4" viewBox="0 0 10 10" fill="none" stroke="#50bae9" stroke-width="1.700" stroke-linecap="round" stroke-linejoin="round"><path d="M9 1L1.500 8.500M1.300 3v5.700H7"/></svg>
<span class="t" style="left:138.00px;top:100.60px;font-size:9.6px;line-height:12px;color:#444;">+</span>
<div class="bl" style="left:142.0px;top:96.4px;width:64px;height:16.5px"></div>
<span class="t" style="left:255.00px;top:100.50px;font-size:9.8px;line-height:12px;color:#333;transform:scaleX(0.9772);">7800</span>
<div class="bl" style="left:277.1px;top:97.5px;width:36.6px;height:14.7px"></div>
<div class="bl" style="left:367.3px;top:92.1px;width:58.5px;height:14.5px"></div>
<span class="t" style="left:428.40px;top:95.10px;font-size:9.7px;line-height:12px;color:#333;">Алина</span>
<div class="bl b2" style="left:368.1px;top:107.3px;width:23px;height:10px"></div>
<div class="sc" style="left:488.1px;top:95.9px;background:#5cc76f"></div>
<span class="t" style="left:495.00px;top:100.50px;font-size:9px;line-height:11px;color:#fff;font-weight:bold;">5</span>
<div class="box" style="left:589.0px;top:93.6px;width:62.3px;height:23px"></div>
<span class="t" style="left:601.20px;top:99.90px;font-size:9.7px;line-height:12px;color:#50bae9;-webkit-text-stroke:0.4px #50bae9;">Оценить</span>
<div class="box" style="left:706.0px;top:93.6px;width:62.6px;height:23px"></div>
<span class="t" style="left:718.00px;top:99.90px;font-size:9.7px;line-height:12px;color:#50bae9;-webkit-text-stroke:0.4px #50bae9;">Оценить</span>
<span class="t" style="left:822.80px;top:100.60px;font-size:9.8px;line-height:12px;color:#333;transform:scaleX(0.9780);">00:00:01</span>
<span class="t" style="left:916.40px;top:100.60px;font-size:9.8px;line-height:12px;color:#333;transform:scaleX(0.9806);">00:08:44</span>
<svg class="a" style="left:1011.6px;top:101.1px" width="9.6" height="9.8" viewBox="0 0 10 10" fill="none" stroke="#50bae9" stroke-width="1.500" stroke-linejoin="round"><path d="M1.600 1l7.500 4-7.500 4z"/><path d="M1.300 1v8" stroke-width="2"/></svg>
<svg class="a" style="left:1130.7px;top:103.8px" width="6.0" height="3.6" viewBox="0 0 10 6"><path d="M1 1l4 4 4-4" fill="none" stroke="#50bae9" stroke-width="2.50" stroke-linecap="round" stroke-linejoin="round"/></svg>
<div class="hl" style="left:11px;top:127.0px;width:1134px"></div>
<div class="cb" style="left:17px;top:140.5px"></div>
<span class="t" style="left:39.60px;top:133.10px;font-size:9.9px;line-height:12px;color:#333;transform:scaleX(0.9596);">17:51:21</span>
<span class="t" style="left:39.60px;top:145.50px;font-size:8.1px;line-height:10px;color:#8a8a8a;transform:scaleX(0.9932);">14.01.26</span>
<span class="t" style="left:39.60px;top:156.70px;font-size:6.6px;line-height:8px;color:#50bae9;transform:scaleX(1.0908);">ссылка на звонок</span>
<svg class="a" style="left:117.6px;top:144.5px" width="7.4" height="7.4" viewBox="0 0 10 10" fill="none" stroke="#50bae9" stroke-width="1.700" stroke-linecap="round" stroke-linejoin="round"><path d="M9 1L1.500 8.500M1.300 3v5.700H7"/></svg>
<span class="t" style="left:138.00px;top:142.90px;font-size:9.6px;line-height:12px;color:#444;">+</span>
<div class="bl" style="left:142.0px;top:138.7px;width:64px;height:16.5px"></div>
<span class="t" style="left:255.00px;top:142.80px;font-size:9.8px;line-height:12px;color:#333;transform:scaleX(0.9772);">7812</span>
<div class="bl" style="left:277.1px;top:139.8px;width:36.6px;height:14.7px"></div>
<span class="t" style="left:371.60px;top:137.40px;font-size:9.7px;line-height:12px;color:#333;transform:scaleX(0.9873);">Сергей</span>
<div class="bl" style="left:403.1px;top:133.9px;width:44.0px;height:16px"></div>
<div class="bl b2" style="left:368.1px;top:149.6px;width:23px;height:10px"></div>
<div class="sc" style="left:488.1px;top:138.2px;background:#5cc76f"></div>
<span class="t" style="left:495.00px;top:142.80px;font-size:9px;line-height:11px;color:#fff;font-weight:bold;">5</span>
<div class="box" style="left:589.0px;top:135.9px;width:62.3px;height:23px"></div>
<span class="t" style="left:601.20px;top:142.20px;font-size:9.7px;line-height:12px;color:#50bae9;-webkit-text-stroke:0.4px #50bae9;">Оценить</span>
<div class="box" style="left:706.0px;top:135.9px;width:62.6px;height:23px"></div>
<span class="t" style="left:718.00px;top:142.20px;font-size:9.7px;line-height:12px;color:#50bae9;-webkit-text-stroke:0.4px #50bae9;">Оценить</span>
<span class="t" style="left:822.80px;top:142.90px;font-size:9.8px;line-height:12px;color:#333;transform:scaleX(0.9780);">00:00:04</span>
<span class="t" style="left:916.40px;top:142.90px;font-size:9.8px;line-height:12px;color:#333;transform:scaleX(0.9806);">00:06:56</span>
<svg class="a" style="left:1011.6px;top:143.4px" width="9.6" height="9.8" viewBox="0 0 10 10" fill="none" stroke="#50bae9" stroke-width="1.500" stroke-linejoin="round"><path d="M1.600 1l7.500 4-7.500 4z"/><path d="M1.300 1v8" stroke-width="2"/></svg>
<svg class="a" style="left:1130.7px;top:146.1px" width="6.0" height="3.6" viewBox="0 0 10 6"><path d="M1 1l4 4 4-4" fill="none" stroke="#50bae9" stroke-width="2.50" stroke-linecap="round" stroke-linejoin="round"/></svg>
<div class="hl" style="left:11px;top:169.0px;width:1134px"></div>
<div class="cb" style="left:17px;top:182.8px"></div>
<span class="t" style="left:39.60px;top:175.40px;font-size:9.9px;line-height:12px;color:#333;transform:scaleX(0.9596);">17:45:38</span>
<span class="t" style="left:39.60px;top:187.80px;font-size:8.1px;line-height:10px;color:#8a8a8a;transform:scaleX(0.9932);">14.01.26</span>
<span class="t" style="left:39.60px;top:199.00px;font-size:6.6px;line-height:8px;color:#50bae9;transform:scaleX(1.0908);">ссылка на звонок</span>
<svg class="a" style="left:117.6px;top:186.8px" width="7.4" height="7.4" viewBox="0 0 10 10" fill="none" stroke="#50bae9" stroke-width="1.700" stroke-linecap="round" stroke-linejoin="round"><path d="M9 1L1.500 8.500M1.300 3v5.700H7"/></svg>
<span class="t" style="left:138.00px;top:185.20px;font-size:9.6px;line-height:12px;color:#444;">+</span>
<div class="bl" style="left:142.0px;top:181.0px;width:64px;height:16.5px"></div>
<span class="t" style="left:255.00px;top:185.10px;font-size:9.8px;line-height:12px;color:#333;transform:scaleX(0.9772);">7495</span>
<div class="bl" style="left:277.1px;top:182.1px;width:36.6px;height:14.7px"></div>
<div class="bl" style="left:367.3px;top:176.7px;width:58.5px;height:14.5px"></div>
<span class="t" style="left:428.40px;top:179.70px;font-size:9.7px;line-height:12px;color:#333;">Алина</span>
<div class="bl b2" style="left:368.1px;top:191.9px;width:23px;height:10px"></div>
<div class="sc" style="left:488.1px;top:180.5px;background:#5cc76f"></div>
<span class="t" style="left:495.00px;top:185.10px;font-size:9px;line-height:11px;color:#fff;font-weight:bold;">5</span>
<div class="box" style="left:589.0px;top:178.2px;width:62.3px;height:23px"></div>
<span class="t" style="left:601.20px;top:184.50px;font-size:9.7px;line-height:12px;color:#50bae9;-webkit-text-stroke:0.4px #50bae9;">Оценить</span>
<div class="box" style="left:706.0px;top:178.2px;width:62.6px;height:23px"></div>
<span class="t" style="left:718.00px;top:184.50px;font-size:9.7px;line-height:12px;color:#50bae9;-webkit-text-stroke:0.4px #50bae9;">Оценить</span>
<span class="t" style="left:822.80px;top:185.20px;font-size:9.8px;line-height:12px;color:#333;transform:scaleX(0.9780);">00:00:06</span>
<span class="t" style="left:916.40px;top:185.20px;font-size:9.8px;line-height:12px;color:#333;transform:scaleX(0.9806);">00:01:30</span>
<svg class="a" style="left:1011.6px;top:185.7px" width="9.6" height="9.8" viewBox="0 0 10 10" fill="none" stroke="#50bae9" stroke-width="1.500" stroke-linejoin="round"><path d="M1.600 1l7.500 4-7.500 4z"/><path d="M1.300 1v8" stroke-width="2"/></svg>
<svg class="a" style="left:1130.7px;top:188.4px" width="6.0" height="3.6" viewBox="0 0 10 6"><path d="M1 1l4 4 4-4" fill="none" stroke="#50bae9" stroke-width="2.50" stroke-linecap="round" stroke-linejoin="round"/></svg>
<div class="hl" style="left:11px;top:212.0px;width:1134px"></div>
<div class="cb" style="left:17px;top:225.1px"></div>
<span class="t" style="left:39.60px;top:217.70px;font-size:9.9px;line-height:12px;color:#333;transform:scaleX(0.9596);">17:37:52</span>
<span class="t" style="left:39.60px;top:230.10px;font-size:8.1px;line-height:10px;color:#8a8a8a;transform:scaleX(0.9932);">14.01.26</span>
<span class="t" style="left:39.60px;top:241.30px;font-size:6.6px;line-height:8px;color:#50bae9;transform:scaleX(1.0908);">ссылка на звонок</span>
<svg class="a" style="left:117.6px;top:229.1px" width="7.4" height="7.4" viewBox="0 0 10 10" fill="none" stroke="#50bae9" stroke-width="1.700" stroke-linecap="round" stroke-linejoin="round"><path d="M9 1L1.500 8.500M1.300 3v5.700H7"/></svg>
<span class="t" style="left:138.00px;top:227.50px;font-size:9.6px;line-height:12px;color:#444;">+</span>
<div class="bl" style="left:142.0px;top:223.3px;width:64px;height:16.5px"></div>
<span class="t" style="left:255.00px;top:227.40px;font-size:9.8px;line-height:12px;color:#333;transform:scaleX(0.9772);">7495</span>
<div class="bl" style="left:277.1px;top:224.4px;width:36.6px;height:14.7px"></div>
<span class="t" style="left:371.60px;top:222.00px;font-size:9.7px;line-height:12px;color:#333;transform:scaleX(1.0703);">Денис</span>
<div class="bl" style="left:401.1px;top:218.5px;width:73.0px;height:16px"></div>
<div class="bl b2" style="left:368.1px;top:234.2px;width:23px;height:10px"></div>
<div class="sc" style="left:488.1px;top:222.8px;background:#5cc76f"></div>
<span class="t" style="left:495.00px;top:227.40px;font-size:9px;line-height:11px;color:#fff;font-weight:bold;">5</span>
<div class="box" style="left:589.0px;top:220.5px;width:62.3px;height:23px"></div>
<span class="t" style="left:601.20px;top:226.80px;font-size:9.7px;line-height:12px;color:#50bae9;-webkit-text-stroke:0.4px #50bae9;">Оценить</span>
<div class="box" style="left:706.0px;top:220.5px;width:62.6px;height:23px"></div>
<span class="t" style="left:718.00px;top:226.80px;font-size:9.7px;line-height:12px;color:#50bae9;-webkit-text-stroke:0.4px #50bae9;">Оценить</span>
<span class="t" style="left:822.80px;top:227.50px;font-size:9.8px;line-height:12px;color:#333;transform:scaleX(0.9780);">00:00:03</span>
<span class="t" style="left:916.40px;top:227.50px;font-size:9.8px;line-height:12px;color:#333;transform:scaleX(0.9806);">00:08:57</span>
<svg class="a" style="left:1011.6px;top:228.0px" width="9.6" height="9.8" viewBox="0 0 10 10" fill="none" stroke="#50bae9" stroke-width="1.500" stroke-linejoin="round"><path d="M1.600 1l7.500 4-7.500 4z"/><path d="M1.300 1v8" stroke-width="2"/></svg>
<svg class="a" style="left:1130.7px;top:230.7px" width="6.0" height="3.6" viewBox="0 0 10 6"><path d="M1 1l4 4 4-4" fill="none" stroke="#50bae9" stroke-width="2.50" stroke-linecap="round" stroke-linejoin="round"/></svg>
<div class="hl" style="left:11px;top:254.0px;width:1134px"></div>
<div class="cb" style="left:17px;top:267.4px"></div>
<span class="t" style="left:39.60px;top:260.00px;font-size:9.9px;line-height:12px;color:#333;transform:scaleX(0.9596);">16:52:29</span>
<span class="t" style="left:39.60px;top:272.40px;font-size:8.1px;line-height:10px;color:#8a8a8a;transform:scaleX(0.9932);">14.01.26</span>
<span class="t" style="left:39.60px;top:283.60px;font-size:6.6px;line-height:8px;color:#50bae9;transform:scaleX(1.0908);">ссылка на звонок</span>
<svg class="a" style="left:117.6px;top:271.4px" width="7.4" height="7.4" viewBox="0 0 10 10" fill="none" stroke="#50bae9" stroke-width="1.700" stroke-linecap="round" stroke-linejoin="round"><path d="M9 1L1.500 8.500M1.300 3v5.700H7"/></svg>
<span class="t" style="left:138.00px;top:269.80px;font-size:9.6px;line-height:12px;color:#444;">+</span>
<div class="bl" style="left:142.0px;top:265.6px;width:64px;height:16.5px"></div>
<span class="t" style="left:255.00px;top:269.70px;font-size:9.8px;line-height:12px;color:#333;transform:scaleX(0.9772);">7812</span>
<div class="bl" style="left:277.1px;top:266.7px;width:36.6px;height:14.7px"></div>
<div class="bl" style="left:367.3px;top:261.3px;width:58.5px;height:14.5px"></div>
<span class="t" style="left:428.40px;top:264.30px;font-size:9.7px;line-height:12px;color:#333;">Алина</span>
<div class="bl b2" style="left:368.1px;top:276.5px;width:23px;height:10px"></div>
<div class="sc" style="left:488.1px;top:265.1px;background:#5cc76f"></div>
<span class="t" style="left:495.00px;top:269.70px;font-size:9px;line-height:11px;color:#fff;font-weight:bold;">5</span>
<div class="box" style="left:589.0px;top:262.8px;width:62.3px;height:23px"></div>
<span class="t" style="left:601.20px;top:269.10px;font-size:9.7px;line-height:12px;color:#50bae9;-webkit-text-stroke:0.4px #50bae9;">Оценить</span>
<div class="box" style="left:706.0px;top:262.8px;width:62.6px;height:23px"></div>
<span class="t" style="left:718.00px;top:269.10px;font-size:9.7px;line-height:12px;color:#50bae9;-webkit-text-stroke:0.4px #50bae9;">Оценить</span>
<span class="t" style="left:822.80px;top:269.80px;font-size:9.8px;line-height:12px;color:#333;transform:scaleX(0.9780);">00:00:05</span>
<span class="t" style="left:916.40px;top:269.80px;font-size:9.8px;line-height:12px;color:#333;transform:scaleX(0.9806);">00:06:32</span>
<svg class="a" style="left:1011.6px;top:270.3px" width="9.6" height="9.8" viewBox="0 0 10 10" fill="none" stroke="#50bae9" stroke-width="1.500" stroke-linejoin="round"><path d="M1.600 1l7.500 4-7.500 4z"/><path d="M1.300 1v8" stroke-width="2"/></svg>
<svg class="a" style="left:1130.7px;top:273.0px" width="6.0" height="3.6" viewBox="0 0 10 6"><path d="M1 1l4 4 4-4" fill="none" stroke="#50bae9" stroke-width="2.50" stroke-linecap="round" stroke-linejoin="round"/></svg>
<div class="hl" style="left:11px;top:296.0px;width:1134px"></div>
<div class="cb" style="left:17px;top:309.7px"></div>
<span class="t" style="left:39.60px;top:302.30px;font-size:9.9px;line-height:12px;color:#333;transform:scaleX(0.9596);">16:36:40</span>
<span class="t" style="left:39.60px;top:314.70px;font-size:8.1px;line-height:10px;color:#8a8a8a;transform:scaleX(0.9932);">14.01.26</span>
<span class="t" style="left:39.60px;top:325.90px;font-size:6.6px;line-height:8px;color:#50bae9;transform:scaleX(1.0908);">ссылка на звонок</span>
<svg class="a" style="left:117.6px;top:313.7px" width="7.4" height="7.4" viewBox="0 0 10 10" fill="none" stroke="#50bae9" stroke-width="1.700" stroke-linecap="round" stroke-linejoin="round"><path d="M9 1L1.500 8.500M1.300 3v5.700H7"/></svg>
<span class="t" style="left:138.00px;top:312.10px;font-size:9.6px;line-height:12px;color:#444;">+</span>
<div class="bl" style="left:142.0px;top:307.9px;width:64px;height:16.5px"></div>
<span class="t" style="left:255.00px;top:312.00px;font-size:9.8px;line-height:12px;color:#333;transform:scaleX(0.9844);">78123097000</span>
<span class="t" style="left:371.60px;top:306.60px;font-size:9.7px;line-height:12px;color:#333;transform:scaleX(0.9873);">Сергей</span>
<div class="bl" style="left:403.1px;top:303.1px;width:44.0px;height:16px"></div>
<div class="bl b2" style="left:368.1px;top:318.8px;width:23px;height:10px"></div>
<div class="sc" style="left:488.1px;top:307.4px;background:#5cc76f"></div>
<span class="t" style="left:495.00px;top:312.00px;font-size:9px;line-height:11px;color:#fff;font-weight:bold;">5</span>
<div class="box" style="left:589.0px;top:305.1px;width:62.3px;height:23px"></div>
<span class="t" style="left:601.20px;top:311.40px;font-size:9.7px;line-height:12px;color:#50bae9;-webkit-text-stroke:0.4px #50bae9;">Оценить</span>
<div class="box" style="left:706.0px;top:305.1px;width:62.6px;height:23px"></div>
<span class="t" style="left:718.00px;top:311.40px;font-size:9.7px;line-height:12px;color:#50bae9;-webkit-text-stroke:0.4px #50bae9;">Оценить</span>
<span class="t" style="left:822.80px;top:312.10px;font-size:9.8px;line-height:12px;color:#333;transform:scaleX(0.9780);">00:00:10</span>
<span class="t" style="left:916.40px;top:312.10px;font-size:9.8px;line-height:12px;color:#333;transform:scaleX(0.9806);">00:03:37</span>
<svg class="a" style="left:1011.6px;top:312.6px" width="9.6" height="9.8" viewBox="0 0 10 10" fill="none" stroke="#50bae9" stroke-width="1.500" stroke-linejoin="round"><path d="M1.600 1l7.500 4-7.500 4z"/><path d="M1.300 1v8" stroke-width="2"/></svg>
<svg class="a" style="left:1130.7px;top:315.3px" width="6.0" height="3.6" viewBox="0 0 10 6"><path d="M1 1l4 4 4-4" fill="none" stroke="#50bae9" stroke-width="2.50" stroke-linecap="round" stroke-linejoin="round"/></svg>
</div>
<div class="a" style="left:226.2px;top:649.4px;width:156px;height:21.8px;border-radius:3px;background:#eef7fc"></div>
<div class="a" style="left:248.7px;top:649.4px;width:22.1px;height:21.8px;border-radius:3px;background:#5bc2ea"></div>
<span class="t" style="left:235.10px;top:654.80px;font-size:8.3px;line-height:10px;color:#5a5555;transform:scaleX(0.9946);">1</span>
<span class="t" style="left:257.30px;top:654.80px;font-size:8.3px;line-height:10px;color:#fff;-webkit-text-stroke:0.2px #fff;transform:scaleX(0.9946);">2</span>
<span class="t" style="left:279.50px;top:654.80px;font-size:8.3px;line-height:10px;color:#5a5555;transform:scaleX(0.9946);">3</span>
<span class="t" style="left:301.70px;top:654.80px;font-size:8.3px;line-height:10px;color:#5a5555;transform:scaleX(0.9946);">4</span>
<span class="t" style="left:323.90px;top:654.80px;font-size:8.3px;line-height:10px;color:#5a5555;transform:scaleX(0.9946);">5</span>
<span class="t" style="left:346.10px;top:654.80px;font-size:8.3px;line-height:10px;color:#5a5555;transform:scaleX(0.9946);">6</span>
<span class="t" style="left:368.30px;top:654.80px;font-size:8.3px;line-height:10px;color:#5a5555;transform:scaleX(0.9946);">7</span>
<svg class="a" style="left:181.7px;top:656.1px" width="11.2" height="8.4" viewBox="0 0 11.2 8.4" fill="none" stroke="#50bae9" stroke-width="1.200" stroke-linecap="round" stroke-linejoin="round"><path d="M.6 .3v7.800M2.400 4.200h8.300M6.300 .5L2.500 4.200l3.800 3.700"/></svg>
<svg class="a" style="left:210.2px;top:656.1px" width="9.8" height="8.4" viewBox="0 0 9.8 8.4" fill="none" stroke="#50bae9" stroke-width="1.200" stroke-linecap="round" stroke-linejoin="round"><path d="M.9 4.200h8.400M4.700 .5L.9 4.200l3.800 3.700"/></svg>
<svg class="a" style="left:388.2px;top:656.1px" width="9.8" height="8.4" viewBox="0 0 9.8 8.4" fill="none" stroke="#50bae9" stroke-width="1.200" stroke-linecap="round" stroke-linejoin="round"><path d="M.5 4.200h8.400M5.100 .5l3.800 3.700-3.800 3.700"/></svg>
<svg class="a" style="left:415.1px;top:656.1px" width="11.2" height="8.4" viewBox="0 0 11.2 8.4" fill="none" stroke="#50bae9" stroke-width="1.200" stroke-linecap="round" stroke-linejoin="round"><path d="M10.600 .3v7.800M.5 4.200h8.300M4.900 .5l3.800 3.700-3.800 3.700"/></svg>
</body>
</html>
